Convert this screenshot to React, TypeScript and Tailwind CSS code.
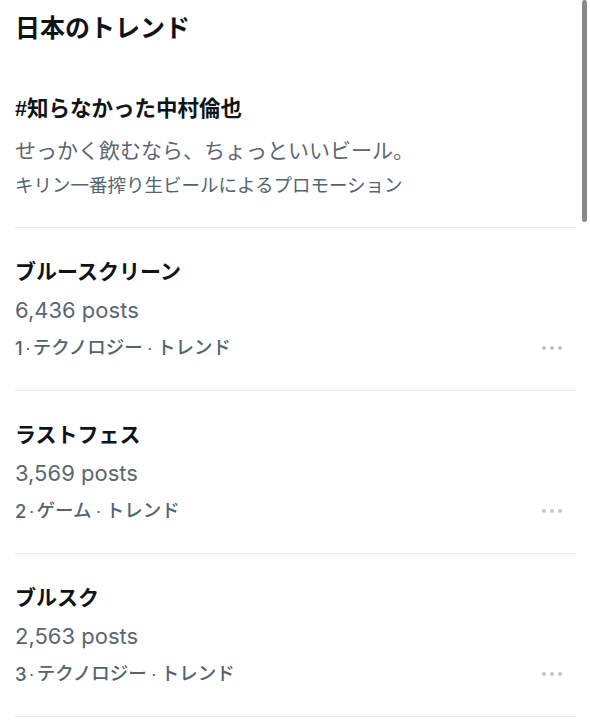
import React from 'react'

const trends = [
  { title: 'ブルースクリーン', posts: '6,436 posts', rank: '1', category: 'テクノロジー' },
  { title: 'ラストフェス', posts: '3,569 posts', rank: '2', category: 'ゲーム' },
  { title: 'ブルスク', posts: '2,563 posts', rank: '3', category: 'テクノロジー' },
]

const font = "font-['Liberation_Sans','Noto_Sans_CJK_JP',sans-serif]"
const latin = "font-['Inter','Noto_Sans_CJK_JP',sans-serif]"

const MoreDots = () => (
  <div className="flex items-center gap-[4px] mr-[14px]">
    <span className="w-[4px] h-[4px] rounded-full bg-[#c2c6ca]" />
    <span className="w-[4px] h-[4px] rounded-full bg-[#c2c6ca]" />
    <span className="w-[4px] h-[4px] rounded-full bg-[#c2c6ca]" />
  </div>
)

const TrendItem = ({ title, posts, rank, category }: { title: string; posts: string; rank: string; category: string }) => (
  <div className="flex flex-col pt-[31px] pb-[29px] border-b border-[#e7e9eb]">
    <p className="h-[26px] text-[21px] leading-[26px] font-bold text-[#0f1419]">{title}</p>
    <p className={`h-[26px] text-[22px] leading-[26px] text-[#5b6670] mt-[12px] ${latin}`}>{posts}</p>
    <div className="flex items-center justify-between h-[26px] mt-[12px]">
      <p className="flex items-center h-[26px] text-[18.5px] leading-[26px] font-medium text-[#536471]">
        <span className={latin}>{rank}</span>
        <span className="mx-[2px]">·</span>
        <span>{category}</span>
        <span className="mx-[4px]">·</span>
        <span>トレンド</span>
      </p>
      <MoreDots />
    </div>
  </div>
)

export default function App() {
  return (
    <div className={`relative w-[590px] h-[721px] bg-white overflow-hidden ${font}`}>
      <div className="absolute right-[3px] top-0 w-[5px] h-[222px] rounded-full bg-[#8a8a8a]" />
      <div className="flex flex-col pl-[15px] pr-[14px]">
        <h1 className="text-[25px] leading-[30px] font-bold text-[#0f1419] mt-[13px]">日本のトレンド</h1>
        <div className="flex flex-col pt-[53px] pb-[29px] border-b border-[#e7e9eb]">
          <p className="text-[21.5px] leading-[26px] font-bold text-[#0f1419]">#知らなかった中村倫也</p>
          <p className="text-[21px] leading-[26px] text-[#5b6670] mt-[16px]">せっかく飲むなら、ちょっといいビール。</p>
          <p className="text-[18.5px] leading-[24px] text-[#536471] mt-[10px]">キリン一番搾り生ビールによるプロモーション</p>
        </div>
        {trends.map((t) => (
          <TrendItem key={t.rank} {...t} />
        ))}
      </div>
    </div>
  )
}
